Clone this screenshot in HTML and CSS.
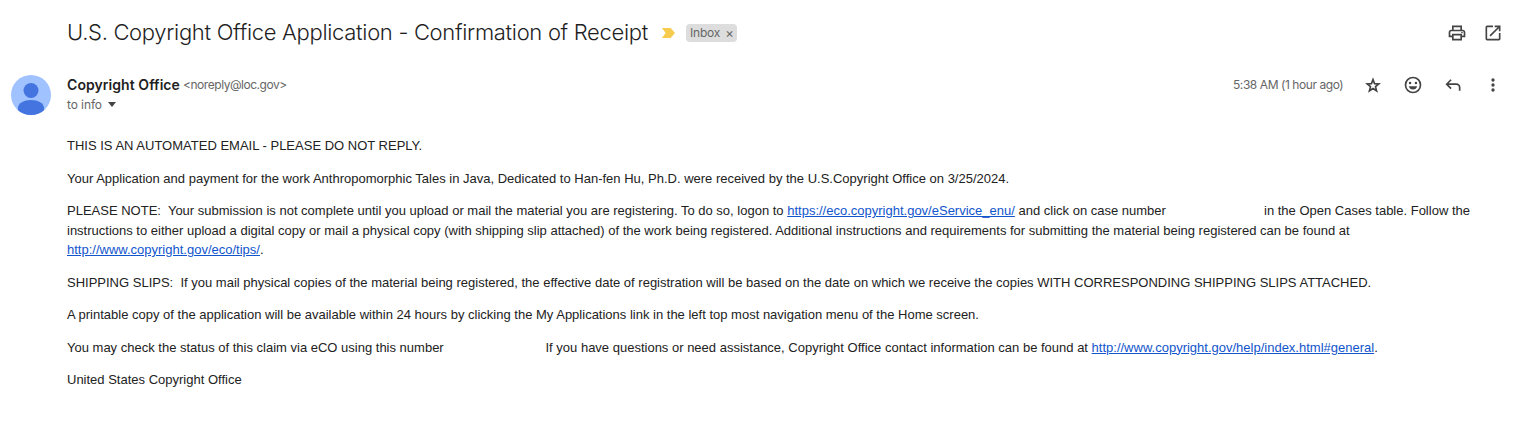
FILE: index.html
```html
<!DOCTYPE html>
<html lang="en">
<head>
<meta charset="utf-8">
<title>U.S. Copyright Office Application - Confirmation of Receipt</title>
<link rel="stylesheet" href="styles.css">
</head>
<body>
<header class="subject-bar">
  <h1 class="subject">U.S. Copyright Office Application - Confirmation of Receipt</h1>
  <svg class="important" width="13" height="10" viewBox="0 0 13 10"><path fill="#f7cb4d" d="M0 0h8.600L13 5 8.600 10H0l3.600-5z"/></svg>
  <div class="label"><span class="label-name">Inbox</span><span class="label-close">×</span></div>
  <div class="top-actions">
    <svg class="icon" viewBox="0 0 24 24"><path d="M19 8h-1V3H6v5H5c-1.660 0-3 1.340-3 3v6h4v4h12v-4h4v-6c0-1.660-1.340-3-3-3zM8 5h8v3H8V5zm8 12v2H8v-4h8v2zm2-2v-2H6v2H4v-4c0-.55.45-1 1-1h14c.55 0 1 .45 1 1v4h-2z"/><circle cx="18" cy="11.500" r="1"/></svg>
    <svg class="icon" viewBox="0 0 24 24"><path d="M19 19H5V5h7V3H5a2 2 0 0 0-2 2v14a2 2 0 0 0 2 2h14c1.100 0 2-.9 2-2v-7h-2v7zM14 3v2h3.590l-9.830 9.830 1.410 1.410L19 6.410V10h2V3h-7z"/></svg>
  </div>
</header>
<section class="message-head">
  <svg class="avatar" viewBox="0 0 40 40"><defs><clipPath id="disc"><circle cx="20" cy="20" r="20"/></clipPath></defs><g clip-path="url(#disc)"><path fill="#a0c3ff" d="M0 0h40v40H0z"/><circle cx="20" cy="15.500" r="7.500" fill="#4374e0"/><path fill="#4374e0" d="M7 40v-7c0-5 6-8 13-8s13 3 13 8v7z"/></g></svg>
  <div class="people">
    <div class="from"><span class="sender">Copyright Office</span><span class="address">&lt;noreply@loc.gov&gt;</span></div>
    <div class="to"><span class="to-name">to info</span><span class="caret"></span></div>
  </div>
  <span class="time">5:38 AM (1 hour ago)</span>
  <div class="actions">
    <svg class="icon" viewBox="0 0 24 24"><path fill="none" stroke="#444" stroke-width="2" d="M12 5.600l1.850 4.750 5.100.35-3.950 3.250 1.300 5L12 16.200l-4.300 2.750 1.300-5-3.950-3.250 5.100-.35z"/></svg>
    <svg class="icon" viewBox="0 0 24 24"><path fill-rule="evenodd" d="M12 2a10 10 0 1 0 0 20 10 10 0 0 0 0-20zm0 2a8 8 0 1 1 0 16 8 8 0 0 1 0-16z"/><circle cx="8.500" cy="9.500" r="1.500"/><circle cx="15.500" cy="9.500" r="1.500"/><path d="M7 13.500h10c-.5 2.400-2.500 4-5 4s-4.500-1.600-5-4z"/></svg>
    <svg class="icon" viewBox="0 0 24 24"><path d="M19 19v-4a3 3 0 0 0-3-3H6.830l3.590 3.590L9 17l-6-6 6-6 1.420 1.410L6.830 10H16a5 5 0 0 1 5 5v4z"/></svg>
    <svg class="icon" viewBox="0 0 24 24"><circle cx="12" cy="6" r="2"/><circle cx="12" cy="12" r="2"/><circle cx="12" cy="18" r="2"/></svg>
  </div>
</section>
<main class="body">
  <p><span class="line">THIS IS AN AUTOMATED EMAIL - PLEASE DO NOT REPLY.</span></p>
  <p><span class="line">Your Application and payment for the work Anthropomorphic Tales in Java, Dedicated to Han-fen Hu, Ph.D. were received by the U.S.Copyright Office on 3/25/2024.</span></p>
  <p>
    <span class="line"><span class="before-case">PLEASE NOTE:&nbsp; Your submission is not complete until you upload or mail the material you are registering. To do so, logon to <a href="#">https://eco.copyright.gov/eService_enu/</a> and click on case number</span><span>in the Open Cases table. Follow the</span></span>
    <span class="line">instructions to either upload a digital copy or mail a physical copy (with shipping slip attached) of the work being registered. Additional instructions and requirements for submitting the material being registered can be found at</span>
    <span class="line"><a href="#">http://www.copyright.gov/eco/tips/</a>.</span>
  </p>
  <p><span class="line">SHIPPING SLIPS:&nbsp; If you mail physical copies of the material being registered, the effective date of registration will be based on the date on which we receive the copies WITH CORRESPONDING SHIPPING SLIPS ATTACHED.</span></p>
  <p><span class="line">A printable copy of the application will be available within 24 hours by clicking the My Applications link in the left top most navigation menu of the Home screen.</span></p>
  <p><span class="line"><span class="before-claim">You may check the status of this claim via eCO using this number</span><span>If you have questions or need assistance, Copyright Office contact information can be found at <a href="#">http://www.copyright.gov/help/index.html#general</a>.</span></span></p>
  <p><span class="line">United States Copyright Office</span></p>
</main>
</body>
</html>
```
FILE: styles.css
```css
* { box-sizing: border-box; }
body { margin: 0; width: 1532px; height: 427px; overflow: hidden; background: #fff; color: #222; font-family: "Liberation Sans", Arial, sans-serif; }
.subject-bar { display: flex; align-items: center; height: 66px; padding: 0 29px 0 67px; }
.subject { margin: 0; padding-bottom: 2px; width: 582px; white-space: nowrap; font: 300 22px/28px Inter, sans-serif; letter-spacing: -.31px; color: #1f1f1f; }
.important { margin-left: 13px; }
.label { display: flex; align-items: center; gap: 5px; height: 18px; width: 51px; margin-left: 11px; padding-left: 4px; border-radius: 4px; background: #ddd; color: #666; font: 12px/18px Inter, sans-serif; }
.label-name { letter-spacing: -.2px; }
.label-close { font-size: 13px; }
.top-actions { display: flex; gap: 16px; margin-left: auto; }
.icon { display: block; width: 20px; height: 20px; fill: #444; }
.message-head { display: flex; height: 58px; padding: 9px 29px 0 11px; font-family: Inter, sans-serif; }
.avatar { width: 40px; height: 40px; flex: none; }
.people { margin-left: 16px; }
.from { display: flex; align-items: center; height: 20px; padding-bottom: 1px; white-space: nowrap; }
.sender { width: 116px; font-size: 14px; font-weight: 600; letter-spacing: .06px; color: #1f1f1f; }
.address { font-size: 12px; letter-spacing: -.46px; color: #666; }
.to { display: flex; align-items: center; height: 20px; padding-bottom: 1px; font-size: 12px; letter-spacing: -.1px; color: #666; }
.to-name { width: 41px; }
.caret { border: 4px solid transparent; border-top: 5px solid #444; border-bottom: 0; }
.time { margin-left: auto; width: 111px; height: 20px; line-height: 20px; font-size: 12px; letter-spacing: -.43px; white-space: nowrap; color: #666; }
.actions { display: flex; gap: 20px; margin-left: 19px; }
.body { padding: 12px 0 0 67px; font-size: 13px; line-height: 19.5px; }
.body p { margin: 0 0 13px; }
.line { display: flex; white-space: pre; }
.before-case { width: 1197px; }
.before-claim { width: 478.5px; }
a { color: #15c; text-decoration: underline; }
```
